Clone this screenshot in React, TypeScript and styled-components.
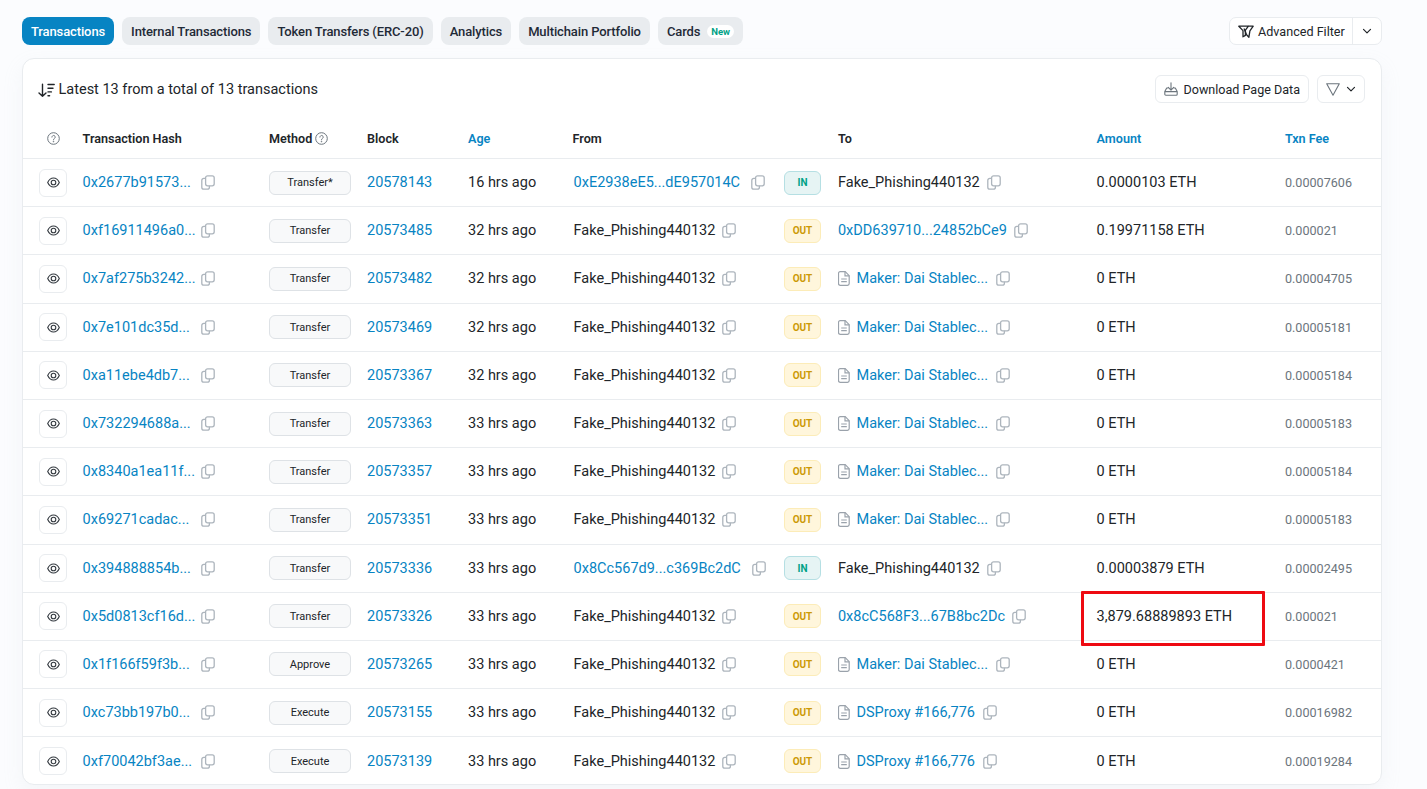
import React from "react";
import styled, { createGlobalStyle } from "styled-components";

const Global = createGlobalStyle`
  html, body { margin: 0; padding: 0; background: #fbfcfe; }
  body { font-family: Roboto, "Liberation Sans", sans-serif; color: #212529; font-size: 14.5px; }
  * { box-sizing: border-box; }
`;

const Page = styled.div`
  width: 1427px;
  height: 789px;
  overflow: hidden;
  padding: 17px 45px 0 22px;
`;
const TopBar = styled.div`
  display: flex;
  justify-content: space-between;
  align-items: flex-start;
  height: 41px;
`;
const Tabs = styled.div`
  display: flex;
  gap: 8px;
`;
const Tab = styled.div<{ $active?: boolean }>`
  height: 28px;
  padding: 0 9px;
  border-radius: 8px;
  display: flex;
  align-items: center;
  gap: 7px;
  font-size: 13px;
  font-weight: 500;
  letter-spacing: -0.12px;
  background: ${(p) => (p.$active ? "#0784c3" : "#e9ecef")};
  color: ${(p) => (p.$active ? "#fff" : "#1f2a37")};
`;
const NewPill = styled.span`
  background: #fff;
  color: #00a186;
  font-size: 9.5px;
  font-weight: 700;
  letter-spacing: 0;
  height: 13px;
  line-height: 13px;
  padding: 0 4px;
  border-radius: 7px;
`;
const SplitButton = styled.div`
  display: flex;
  height: 28px;
  width: 153px;
  background: #fff;
  border: 1px solid #e9ecef;
  border-radius: 7px;
  font-size: 12.6px;
  color: #212529;
`;
const SplitMain = styled.div`
  width: 123px;
  display: flex;
  align-items: center;
  padding-left: 8px;
  gap: 4px;
  border-right: 1px solid #e9ecef;
`;
const SplitCaret = styled.div`
  flex: 1;
  display: flex;
  align-items: center;
  justify-content: center;
`;
const Card = styled.div`
  width: 1360px;
  height: 727px;
  background: #fff;
  border: 1px solid #e9ecef;
  border-radius: 12px;
  box-shadow: 0 8px 20px rgba(189, 197, 209, 0.12);
`;
const CardHead = styled.div`
  height: 61px;
  display: flex;
  align-items: flex-end;
  justify-content: space-between;
  padding: 0 16px 17px 15px;
`;
const Summary = styled.div`
  display: flex;
  align-items: center;
  gap: 3.5px;
  margin-bottom: -1px;
  font-size: 14.5px;
  line-height: 28px;
  color: #212529;
`;
const HeadActions = styled.div`
  display: flex;
  gap: 8px;
`;
const OutlineButton = styled.div`
  height: 28px;
  display: flex;
  align-items: center;
  gap: 6px;
  padding: 0 8px;
  background: #fff;
  border: 1px solid #e9ecef;
  border-radius: 6px;
  font-size: 12.55px;
  color: #212529;
`;
const rowColumns = "43.6px 186.4px 98px 101px 105.6px 210.4px 54px 258.6px 188.4px 1fr";
const HeaderRow = styled.div`
  display: grid;
  grid-template-columns: ${rowColumns};
  align-items: center;
  height: 39px;
  padding: 0 0 1px 16px;
  border-bottom: 1px solid #e9ecef;
`;
const HeadCell = styled.div<{ $link?: boolean; $shift?: boolean }>`
  display: flex;
  align-items: center;
  gap: 3px;
  font-size: 12.6px;
  font-weight: 600;
  margin-left: ${(p) => (p.$shift ? "-1px" : "0")};
  color: ${(p) => (p.$link ? "#0784c3" : "#212529")};
`;
const HelpSpacer = styled.span`
  width: 4.5px;
`;
const Row = styled.div<{ $last?: boolean }>`
  display: grid;
  grid-template-columns: ${rowColumns};
  align-items: center;
  height: 48.19px;
  padding-left: 16px;
  border-bottom: ${(p) => (p.$last ? "none" : "1px solid #e9ecef")};
`;
const EyeBox = styled.div`
  width: 28px;
  height: 28px;
  display: flex;
  align-items: center;
  justify-content: center;
  border: 1px solid #e9ecef;
  border-radius: 6px;
  background: #fff;
  color: #343a40;
`;
const Cell = styled.div`
  display: flex;
  align-items: center;
  white-space: nowrap;
  font-size: 14.5px;
  color: #212529;
`;
const HashText = styled.a`
  width: 118px;
  color: #0784c3;
  text-decoration: none;
`;
const LinkText = styled.a`
  color: #0784c3;
  text-decoration: none;
`;
const MethodBadge = styled.div`
  width: 82px;
  height: 24px;
  display: flex;
  align-items: center;
  justify-content: center;
  font-size: 11px;
  color: #212529;
  background: #f8f9fa;
  border: 1px solid #dee2e6;
  border-radius: 6px;
`;
const Direction = styled.div<{ $in?: boolean }>`
  width: 37px;
  height: 24px;
  display: flex;
  align-items: center;
  justify-content: center;
  font-size: 10px;
  font-weight: 700;
  border-radius: 6px;
  color: ${(p) => (p.$in ? "#00a186" : "#cc9a06")};
  background: ${(p) => (p.$in ? "#e6f4f4" : "#fff6dc")};
  border: 1px solid ${(p) => (p.$in ? "#b5dfe3" : "#fcecb8")};
`;
const CopyWrap = styled.span<{ $gap: number }>`
  display: inline-flex;
  margin-left: ${(p) => p.$gap}px;
  color: #adb5bd;
`;
const FileWrap = styled.span`
  display: inline-flex;
  margin-right: 6.5px;
  color: #9aa2ab;
`;
const AmountCell = styled(Cell)<{ $flag?: boolean }>`
  position: relative;
  &::after {
    content: "";
    box-sizing: border-box;
    display: ${(p) => (p.$flag ? "block" : "none")};
    position: absolute;
    left: -16px;
    top: -16.5px;
    width: 184px;
    height: 55px;
    border: 3px solid #ee0a12;
    border-radius: 1px;
  }
`;
const FeeCell = styled.div`
  font-size: 12.6px;
  color: #6c757d;
`;

const Copy = ({ gap = 7 }: { gap?: number }) => (
  <CopyWrap $gap={gap}>
    <svg width="14" height="15" viewBox="0 0 14 15" fill="none" stroke="currentColor" strokeWidth="1.3">
      <rect x="4.6" y="0.8" width="8.6" height="10" rx="2" />
      <path d="M4.6 3.4H2.8a2 2 0 0 0-2 2v6.8a2 2 0 0 0 2 2h3.6a2 2 0 0 0 2-2v-1.4" />
    </svg>
  </CopyWrap>
);
const Eye = () => (
  <svg width="13" height="11" viewBox="0 0 13 11" fill="none" stroke="currentColor" strokeWidth="1.1">
    <path d="M.7 5.5C2 2.6 4 1 6.5 1s4.5 1.6 5.8 4.5C11 8.4 9 10 6.5 10S2 8.4.7 5.5Z" />
    <circle cx="6.5" cy="5.5" r="2.3" />
  </svg>
);
const FileIcon = () => (
  <FileWrap>
    <svg width="12" height="15" viewBox="0 0 12 15" fill="none" stroke="currentColor" strokeWidth="1.2">
      <path d="M2.2.7h5l4 4v7.9a1.7 1.7 0 0 1-1.7 1.7H2.2a1.7 1.7 0 0 1-1.7-1.7V2.4A1.7 1.7 0 0 1 2.2.7Z" />
      <path d="M7 .8v4h4.2M3.2 8h5.6M3.2 10.6h5.6" />
    </svg>
  </FileWrap>
);
const Question = () => (
  <svg width="13" height="13" viewBox="0 0 13 13" fill="none" stroke="#6c757d" strokeWidth="1">
    <circle cx="6.5" cy="6.5" r="5.8" />
    <path d="M4.9 5.1a1.65 1.65 0 1 1 2.5 1.4c-.6.4-.9.7-.9 1.3" strokeLinecap="round" />
    <circle cx="6.5" cy="9.6" r=".35" fill="#6c757d" />
  </svg>
);
const Caret = ({ size = 10 }: { size?: number }) => (
  <svg width={size} height={size} viewBox="0 0 10 10" fill="none" stroke="#212529" strokeWidth="1.2" strokeLinecap="round" strokeLinejoin="round">
    <path d="M1.5 3.3 5 6.8l3.5-3.5" />
  </svg>
);
const SortIcon = () => (
  <svg width="17" height="15" viewBox="0 0 17 15" fill="none" stroke="#212529" strokeWidth="1.4" strokeLinecap="round" strokeLinejoin="round">
    <path d="M4.5 1.2v12M1 9.9l3.5 3.4L8 9.9M10 1.5h6.2M10 5.2h5M10 8.9h3.4M10 12.8h1.6" />
  </svg>
);
const AdvancedIcon = () => (
  <svg width="16" height="13" viewBox="0 0 16 13" fill="none" stroke="#212529" strokeWidth="1.3" strokeLinejoin="round">
    <path d="M.8 1.2h9.6L7.4 5.2v5.2L5 11.8V5.6L.8 1.2Z" />
    <path d="M6 3.4 8.6 9.8l2.3 2.4 1-6.4 3.3-4.6h-4.8" />
  </svg>
);
const DownloadIcon = () => (
  <svg width="14" height="14" viewBox="0 0 14 14" fill="none" stroke="#6c757d" strokeWidth="1.1" strokeLinecap="round" strokeLinejoin="round">
    <path d="M7 .8v7M4.3 5.4 7 8.1l2.7-2.7M3.8 6H2.7L.8 9.6v2.6a1 1 0 0 0 1 1h10.4a1 1 0 0 0 1-1V9.6L11.3 6h-1.1M.8 9.6h12.4" />
  </svg>
);
const FunnelIcon = () => (
  <svg width="14" height="13" viewBox="0 0 14 13" fill="none" stroke="#6c757d" strokeWidth="1.1" strokeLinejoin="round">
    <path d="M.7.8h12.6L7 12.2.7.8Z" />
  </svg>
);

type Party =
  | { kind: "self" }
  | { kind: "addr"; text: string }
  | { kind: "contract"; text: string };

type Tx = {
  hash: string;
  method: string;
  block: string;
  age: string;
  from: Party;
  dir: "IN" | "OUT";
  to: Party;
  amount: string;
  fee: string;
  flag?: boolean;
};

const self: Party = { kind: "self" };
const dai: Party = { kind: "contract", text: "Maker: Dai Stablec..." };
const ds: Party = { kind: "contract", text: "DSProxy #166,776" };

const txs: Tx[] = [
  { hash: "0x2677b91573...", method: "Transfer*", block: "20578143", age: "16 hrs ago", from: { kind: "addr", text: "0xE2938eE5...dE957014C" }, dir: "IN", to: self, amount: "0.0000103 ETH", fee: "0.00007606" },
  { hash: "0xf16911496a0...", method: "Transfer", block: "20573485", age: "32 hrs ago", from: self, dir: "OUT", to: { kind: "addr", text: "0xDD639710...24852bCe9" }, amount: "0.19971158 ETH", fee: "0.000021" },
  { hash: "0x7af275b3242...", method: "Transfer", block: "20573482", age: "32 hrs ago", from: self, dir: "OUT", to: dai, amount: "0 ETH", fee: "0.00004705" },
  { hash: "0x7e101dc35d...", method: "Transfer", block: "20573469", age: "32 hrs ago", from: self, dir: "OUT", to: dai, amount: "0 ETH", fee: "0.00005181" },
  { hash: "0xa11ebe4db7...", method: "Transfer", block: "20573367", age: "32 hrs ago", from: self, dir: "OUT", to: dai, amount: "0 ETH", fee: "0.00005184" },
  { hash: "0x732294688a...", method: "Transfer", block: "20573363", age: "33 hrs ago", from: self, dir: "OUT", to: dai, amount: "0 ETH", fee: "0.00005183" },
  { hash: "0x8340a1ea11f...", method: "Transfer", block: "20573357", age: "33 hrs ago", from: self, dir: "OUT", to: dai, amount: "0 ETH", fee: "0.00005184" },
  { hash: "0x69271cadac...", method: "Transfer", block: "20573351", age: "33 hrs ago", from: self, dir: "OUT", to: dai, amount: "0 ETH", fee: "0.00005183" },
  { hash: "0x394888854b...", method: "Transfer", block: "20573336", age: "33 hrs ago", from: { kind: "addr", text: "0x8Cc567d9...c369Bc2dC" }, dir: "IN", to: self, amount: "0.00003879 ETH", fee: "0.00002495" },
  { hash: "0x5d0813cf16d...", method: "Transfer", block: "20573326", age: "33 hrs ago", from: self, dir: "OUT", to: { kind: "addr", text: "0x8cC568F3...67B8bc2Dc" }, amount: "3,879.68889893 ETH", fee: "0.000021", flag: true },
  { hash: "0x1f166f59f3b...", method: "Approve", block: "20573265", age: "33 hrs ago", from: self, dir: "OUT", to: dai, amount: "0 ETH", fee: "0.0000421" },
  { hash: "0xc73bb197b0...", method: "Execute", block: "20573155", age: "33 hrs ago", from: self, dir: "OUT", to: ds, amount: "0 ETH", fee: "0.00016982" },
  { hash: "0xf70042bf3ae...", method: "Execute", block: "20573139", age: "33 hrs ago", from: self, dir: "OUT", to: ds, amount: "0 ETH", fee: "0.00019284" },
];

const PartyView = ({ p, addrGap }: { p: Party; addrGap: number }) => {
  if (p.kind === "self")
    return (
      <Cell>
        Fake_Phishing440132
        <Copy />
      </Cell>
    );
  if (p.kind === "addr")
    return (
      <Cell>
        <LinkText>{p.text}</LinkText>
        <Copy gap={addrGap} />
      </Cell>
    );
  return (
    <Cell>
      <FileIcon />
      <LinkText>{p.text}</LinkText>
      <Copy gap={8} />
    </Cell>
  );
};

export default function App() {
  return (
    <Page>
      <Global />
      <TopBar>
        <Tabs>
          <Tab $active>Transactions</Tab>
          <Tab>Internal Transactions</Tab>
          <Tab>Token Transfers (ERC-20)</Tab>
          <Tab>Analytics</Tab>
          <Tab>Multichain Portfolio</Tab>
          <Tab>
            Cards<NewPill>New</NewPill>
          </Tab>
        </Tabs>
        <SplitButton>
          <SplitMain>
            <AdvancedIcon />
            Advanced Filter
          </SplitMain>
          <SplitCaret>
            <Caret />
          </SplitCaret>
        </SplitButton>
      </TopBar>
      <Card>
        <CardHead>
          <Summary>
            <SortIcon />
            Latest 13 from a total of 13 transactions
          </Summary>
          <HeadActions>
            <OutlineButton>
              <DownloadIcon />
              Download Page Data
            </OutlineButton>
            <OutlineButton>
              <FunnelIcon />
              <Caret />
            </OutlineButton>
          </HeadActions>
        </CardHead>
        <HeaderRow>
          <HeadCell>
            <HelpSpacer />
            <Question />
          </HeadCell>
          <HeadCell>Transaction Hash</HeadCell>
          <HeadCell>
            Method
            <Question />
          </HeadCell>
          <HeadCell>Block</HeadCell>
          <HeadCell $link>Age</HeadCell>
          <HeadCell $shift>From</HeadCell>
          <HeadCell />
          <HeadCell>To</HeadCell>
          <HeadCell $link>Amount</HeadCell>
          <HeadCell $link>Txn Fee</HeadCell>
        </HeaderRow>
        {txs.map((t, i) => (
          <Row key={t.hash} $last={i === txs.length - 1}>
            <EyeBox>
              <Eye />
            </EyeBox>
            <Cell>
              <HashText>{t.hash}</HashText>
              <Copy gap={0} />
            </Cell>
            <MethodBadge>{t.method}</MethodBadge>
            <Cell>
              <LinkText>{t.block}</LinkText>
            </Cell>
            <Cell>{t.age}</Cell>
            <PartyView p={t.from} addrGap={11} />
            <Direction $in={t.dir === "IN"}>{t.dir}</Direction>
            <PartyView p={t.to} addrGap={7} />
            <AmountCell $flag={t.flag}>{t.amount}</AmountCell>
            <FeeCell>{t.fee}</FeeCell>
          </Row>
        ))}
      </Card>
    </Page>
  );
}
